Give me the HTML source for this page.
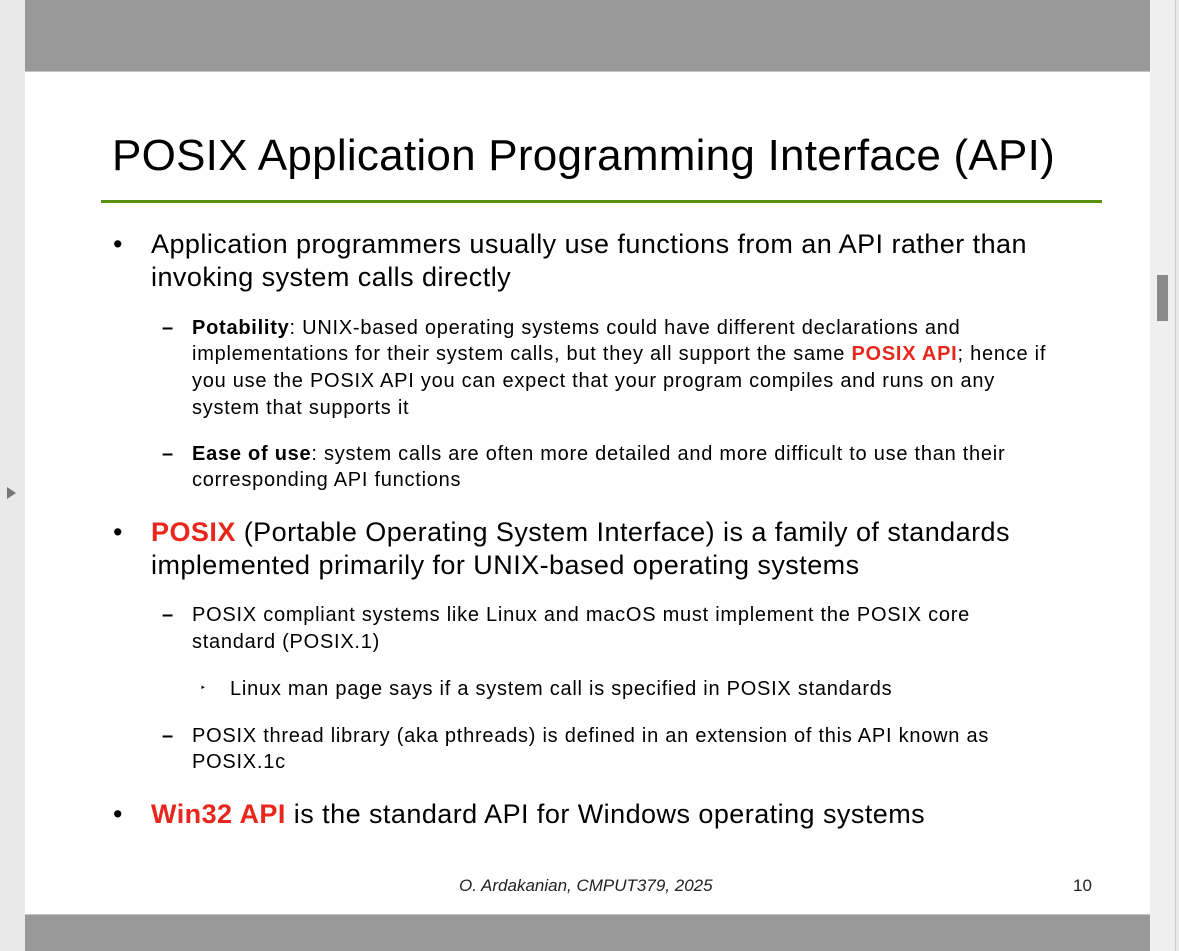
<!DOCTYPE html>
<html><head><meta charset="utf-8"><style>
*{margin:0;padding:0}
body{width:1179px;height:951px;position:relative;background:#e9e9e9;overflow:hidden;font-family:"Liberation Sans",Arial,sans-serif;color:#000}
.page{position:absolute;left:25px;top:0;width:1125px;height:951px;background:#fff}
.band{position:absolute;left:25px;width:1125px;background:#999}
.a{position:absolute;white-space:nowrap}
.m{font-size:27px;line-height:33px;letter-spacing:0.45px}
.s{font-size:20px;line-height:26px;letter-spacing:0.75px}
.r{color:#e8261c;font-weight:bold}
</style></head><body>
<div class="page"></div>
<div class="band" style="top:0;height:71px"></div>
<div class="band" style="top:71px;height:1px;background:#c4c4c4"></div>
<div class="band" style="top:915px;height:36px"></div>
<div class="band" style="top:914px;height:1px;background:#c4c4c4"></div>
<div style="position:absolute;left:1150px;top:0;width:25px;height:951px;background:#efefef"></div>
<div style="position:absolute;left:1175px;top:0;width:1px;height:951px;background:#ccc"></div>
<div style="position:absolute;left:1157px;top:275px;width:11px;height:46px;background:#8a8a8a"></div>
<div style="position:absolute;left:7px;top:487px;width:0;height:0;border-top:6px solid transparent;border-bottom:6px solid transparent;border-left:9px solid #777"></div>

<div class="a" style="left:112px;top:128px;font-size:44px;line-height:56px;letter-spacing:0.25px">POSIX Application Programming Interface (API)</div>
<div style="position:absolute;left:101px;top:200px;width:1001px;height:3px;background:#5a9210"></div>

<div class="a m" style="left:113px;top:228px">•</div>
<div class="a m" style="left:151px;top:228px">Application programmers usually use functions from an API rather than</div>
<div class="a m" style="left:151px;top:261px">invoking system calls directly</div>

<div class="a s" style="left:162px;top:315px;font-weight:bold">–</div>
<div class="a s" style="left:192px;top:315px"><b>Potability</b>: UNIX-based operating systems could have different declarations and</div>
<div class="a s" style="left:192px;top:341px">implementations for their system calls, but they all support the same <span class="r">POSIX API</span>; hence if</div>
<div class="a s" style="left:192px;top:368px">you use the POSIX API you can expect that your program compiles and runs on any</div>
<div class="a s" style="left:192px;top:395px">system that supports it</div>

<div class="a s" style="left:162px;top:441px;font-weight:bold">–</div>
<div class="a s" style="left:192px;top:441px"><b>Ease of use</b>: system calls are often more detailed and more difficult to use than their</div>
<div class="a s" style="left:192px;top:467px">corresponding API functions</div>

<div class="a m" style="left:113px;top:516px">•</div>
<div class="a m" style="left:151px;top:516px"><span class="r">POSIX</span> (Portable Operating System Interface) is a family of standards</div>
<div class="a m" style="left:151px;top:549px">implemented primarily for UNIX-based operating systems</div>

<div class="a s" style="left:162px;top:602px;font-weight:bold">–</div>
<div class="a s" style="left:192px;top:602px">POSIX compliant systems like Linux and macOS must implement the POSIX core</div>
<div class="a s" style="left:192px;top:629px">standard (POSIX.1)</div>

<div class="a" style="left:200px;top:682px;font-size:10px;line-height:14px">‣</div>
<div class="a s" style="left:230px;top:676px">Linux man page says if a system call is specified in POSIX standards</div>

<div class="a s" style="left:162px;top:723px;font-weight:bold">–</div>
<div class="a s" style="left:192px;top:723px">POSIX thread library (aka pthreads) is defined in an extension of this API known as</div>
<div class="a s" style="left:192px;top:749px">POSIX.1c</div>

<div class="a m" style="left:113px;top:798px">•</div>
<div class="a m" style="left:151px;top:798px"><span class="r">Win32 API</span> is the standard API for Windows operating systems</div>

<div class="a" style="left:459px;top:876px;font-size:17px;line-height:20px;font-style:italic;color:#222">O. Ardakanian, CMPUT379, 2025</div>
<div class="a" style="left:1073px;top:876px;font-size:17px;line-height:20px;color:#222">10</div>
</body></html>
